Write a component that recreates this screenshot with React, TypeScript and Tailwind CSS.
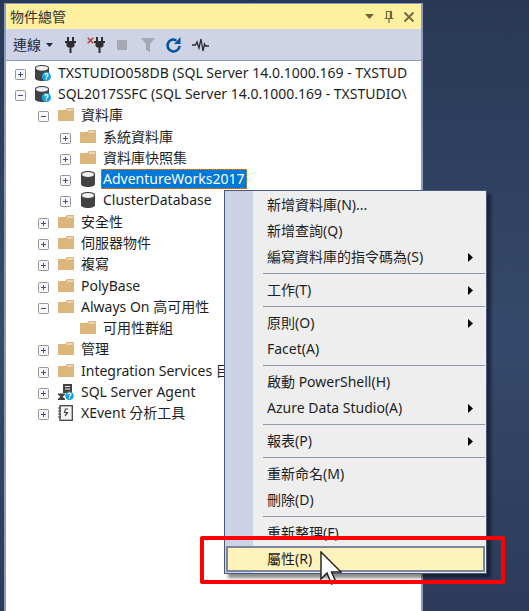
import React from "react";

type IconKind = "server" | "folder" | "db" | "agent" | "xevent";

interface TreeNode {
  label: string;
  icon: IconKind;
  level: 0 | 1 | 2;
  state?: "open" | "closed";
  selected?: boolean;
}

const nodes: TreeNode[] = [
  { label: "TXSTUDIO058DB (SQL Server 14.0.1000.169 - TXSTUD", icon: "server", level: 0, state: "closed" },
  { label: "SQL2017SSFC (SQL Server 14.0.1000.169 - TXSTUDIO\\", icon: "server", level: 0, state: "open" },
  { label: "資料庫", icon: "folder", level: 1, state: "open" },
  { label: "系統資料庫", icon: "folder", level: 2, state: "closed" },
  { label: "資料庫快照集", icon: "folder", level: 2, state: "closed" },
  { label: "AdventureWorks2017", icon: "db", level: 2, state: "closed", selected: true },
  { label: "ClusterDatabase", icon: "db", level: 2, state: "closed" },
  { label: "安全性", icon: "folder", level: 1, state: "closed" },
  { label: "伺服器物件", icon: "folder", level: 1, state: "closed" },
  { label: "複寫", icon: "folder", level: 1, state: "closed" },
  { label: "PolyBase", icon: "folder", level: 1, state: "closed" },
  { label: "Always On 高可用性", icon: "folder", level: 1, state: "open" },
  { label: "可用性群組", icon: "folder", level: 2 },
  { label: "管理", icon: "folder", level: 1, state: "closed" },
  { label: "Integration Services 目錄", icon: "folder", level: 1, state: "closed" },
  { label: "SQL Server Agent", icon: "agent", level: 1, state: "closed" },
  { label: "XEvent 分析工具", icon: "xevent", level: 1, state: "closed" },
];

interface MenuEntry {
  label: string;
  submenu?: boolean;
  active?: boolean;
}

const menuGroups: MenuEntry[][] = [
  [{ label: "新增資料庫(N)..." }, { label: "新增查詢(Q)" }, { label: "編寫資料庫的指令碼為(S)", submenu: true }],
  [{ label: "工作(T)", submenu: true }],
  [{ label: "原則(O)", submenu: true }, { label: "Facet(A)" }],
  [{ label: "啟動 PowerShell(H)" }, { label: "Azure Data Studio(A)", submenu: true }],
  [{ label: "報表(P)", submenu: true }],
  [{ label: "重新命名(M)" }, { label: "刪除(D)" }],
  [{ label: "重新整理(F)" }, { label: "屬性(R)", active: true }],
];

const indent = { 0: "pl-[9px]", 1: "pl-8", 2: "pl-[54px]" };

function NodeIcon({ kind }: { kind: IconKind }) {
  if (kind === "folder") {
    return (
      <svg className="size-4 shrink-0" viewBox="0 0 16 16" aria-hidden="true">
        <path d="M0 3H7L9 1H16V14H0Z" fill="#dcb67a" />
        <path d="M9.3 2.5H15V3.5H8.3Z" fill="#fbf3e2" />
      </svg>
    );
  }
  if (kind === "db") {
    return (
      <svg className="size-4 shrink-0" viewBox="0 0 16 16" aria-hidden="true">
        <path d="M1 3C1 1 4 0 8 0S15 1 15 3V13C15 15 12 16 8 16S1 15 1 13Z" fill="#424242" />
        <ellipse cx="8" cy="3.4" rx="6" ry="2.5" fill="#f0eff1" />
      </svg>
    );
  }
  if (kind === "server") {
    return (
      <svg className="size-4 shrink-0" viewBox="0 0 16 16" aria-hidden="true">
        <path d="M0 3C0 1 3 0 7 0S14 1 14 3V13C14 15 11 16 7 16S0 15 0 13Z" fill="#424242" />
        <ellipse cx="7" cy="3.3" rx="6" ry="2.4" fill="#f0eff1" />
        <circle cx="11.4" cy="11.4" r="4.6" fill="#1ba1e2" />
        <path d="M9.9 10.3C9.9 8.2 13 8.2 13 10.1C13 11.3 11.4 11.2 11.4 12.5M11.4 13.2V14.4" fill="none" stroke="#fff" strokeWidth="1.2" />
      </svg>
    );
  }
  if (kind === "agent") {
    return (
      <svg className="size-4 shrink-0" viewBox="0 0 16 16" aria-hidden="true">
        <path d="M5 0H14V9H5Z" fill="#424242" />
        <path d="M7 2.5H12M7 5H12" stroke="#f0eff1" strokeWidth="1.2" />
        <path d="M0 9.5H7V10.8L4.6 12.8L7 14.8V16H0V14.8L2.4 12.8L0 10.8Z" fill="#424242" />
        <circle cx="11.5" cy="11.7" r="4.3" fill="#1ba1e2" />
        <path d="M10 10.6C10 8.7 13 8.7 13 10.4C13 11.5 11.5 11.4 11.5 12.6M11.5 13.3V14.4" fill="none" stroke="#fff" strokeWidth="1.2" />
      </svg>
    );
  }
  return (
    <svg className="size-4 shrink-0" viewBox="0 0 16 16" aria-hidden="true">
      <rect x="2" y="0.7" width="12.3" height="14.6" fill="#f4f4f4" stroke="#424242" strokeWidth="1.3" />
      <path d="M0 3H3M0 6H3M0 9H3M0 12H3" stroke="#424242" />
      <path d="M10 4H7.5L6.5 7.5H9L7 11L10 7.5" fill="none" stroke="#424242" strokeWidth="1.1" />
    </svg>
  );
}

function Expander({ state, label }: { state?: "open" | "closed"; label: string }) {
  if (!state) return <span className="w-[11px] shrink-0" />;
  return (
    <button type="button" aria-label={label} aria-expanded={state === "open"} className="mt-[3px] size-[11px] shrink-0">
      <svg className="size-[11px]" viewBox="0 0 11 11" aria-hidden="true">
        <rect x="0.5" y="0.5" width="10" height="10" rx="1" fill="#f7f7f7" stroke="#959595" />
        <path d={state === "open" ? "M3 5.5H8" : "M3 5.5H8M5.5 3V8"} stroke="#3f4f90" />
      </svg>
    </button>
  );
}

function ToolButton({ label, children }: { label: string; children: React.ReactNode }) {
  return (
    <button type="button" aria-label={label} className="flex size-[18px] items-center justify-center">
      {children}
    </button>
  );
}

const plugPath = "M2 0H4V4H7V0H9V4H11V6H9.5V9L8 10.5H6.5V16H4.5V10.5H3L1.5 9V6H0V4H2Z";

function Toolbar() {
  return (
    <div className="flex h-8 items-center gap-2 border-b border-[#8e9bbc] bg-[#cfd3e6] pl-[7px] text-[#1b2540]">
      <button type="button" className="flex items-center gap-[5px] text-sm leading-5">
        連線
        <svg className="h-1 w-[7px]" viewBox="0 0 7 4" aria-hidden="true">
          <path d="M0 0H7L3.5 4Z" fill="#1e2b45" />
        </svg>
      </button>
      <ToolButton label="連接物件總管">
        <svg className="h-4 w-[11px]" viewBox="0 0 11 16" aria-hidden="true">
          <path d={plugPath} fill="#2d2d30" />
        </svg>
      </ToolButton>
      <ToolButton label="中斷連接">
        <svg className="h-4 w-[18px] shrink-0" viewBox="0 0 18 16" aria-hidden="true">
          <path transform="translate(7 0)" d={plugPath} fill="#2d2d30" />
          <path d="M0.7 0.7L6.3 6.3M6.3 0.7L0.7 6.3" stroke="#b0402c" strokeWidth="1.5" />
        </svg>
      </ToolButton>
      <ToolButton label="停止">
        <span className="size-[10px] bg-[#a5a8b3]" />
      </ToolButton>
      <ToolButton label="篩選">
        <svg className="size-[14px]" viewBox="0 0 14 14" aria-hidden="true">
          <path d="M0 0H14L9 6V14L5 12V6Z" fill="#a5a8b3" />
        </svg>
      </ToolButton>
      <ToolButton label="重新整理">
        <svg className="size-4" viewBox="0 0 16 16" aria-hidden="true">
          <path d="M13.6 9A6 6 0 1 1 10.5 3.2" fill="none" stroke="#00539c" strokeWidth="2.6" />
          <path d="M8.5 0H15V7H8.5Z" fill="#cfd3e6" />
          <path d="M14.5 0V7H8Z" fill="#00539c" />
          <path d="M8 3H10.5" stroke="#00539c" strokeWidth="2.4" />
        </svg>
      </ToolButton>
      <ToolButton label="活動監視器">
        <svg className="h-[14px] w-[17px]" viewBox="0 0 17 14" aria-hidden="true">
          <path d="M0 7H3.5L5 4L7 10L9 1L11 13L12.5 6L13.5 8H17" fill="none" stroke="#2d2d30" strokeWidth="1.3" />
        </svg>
      </ToolButton>
    </div>
  );
}

function TitleBar() {
  return (
    <header className="flex h-[25px] items-center justify-between bg-[#fff0a0] pr-[6px] pl-1 text-[#333333]">
      <h1 className="text-sm leading-5">物件總管</h1>
      <div className="flex items-center gap-2">
        <button type="button" aria-label="視窗位置" className="flex size-3 items-center justify-center">
          <svg className="h-[5px] w-[9px]" viewBox="0 0 9 5" aria-hidden="true">
            <path d="M0 0H9L4.5 5Z" fill="#75633d" />
          </svg>
        </button>
        <button type="button" aria-label="自動隱藏" className="size-3">
          <svg className="size-3" viewBox="0 0 12 12" aria-hidden="true">
            <path d="M3.5 7.5V0.5H8.5V7.5M1.5 7.5H10.5M6 7.5V12" fill="none" stroke="#75633d" strokeWidth="1.2" />
            <path d="M7.5 0.5V7.5" stroke="#75633d" strokeWidth="1.5" />
          </svg>
        </button>
        <button type="button" aria-label="關閉" className="size-3">
          <svg className="size-3" viewBox="0 0 12 12" aria-hidden="true">
            <path d="M1.5 1.5L10.5 10.5M10.5 1.5L1.5 10.5" stroke="#75633d" strokeWidth="1.8" />
          </svg>
        </button>
      </div>
    </header>
  );
}

function ContextMenu() {
  return (
    <div
      role="menu"
      className="absolute top-[190px] left-[224px] w-[263px] border border-[#4a587c] bg-[#eeeeee] bg-linear-to-r from-[#cdd2e6] from-[28px] to-[#eeeeee] to-[28px] p-px text-[#1e1e1e] shadow-[4px_4px_3px_rgba(0,0,0,0.45)]"
    >
      {menuGroups.map((group, g) => (
        <React.Fragment key={g}>
          {g > 0 && <div role="separator" className="my-[3px] ml-[37px] h-px bg-[#8f99b0]" />}
          {group.map((item) => (
            <button
              key={item.label}
              type="button"
              role="menuitem"
              className={
                item.active
                  ? "flex h-[26px] w-full items-center justify-between border-2 border-[#7d879c] bg-[#fdf3bb] pr-[10px] pl-[39px] text-sm leading-5"
                  : "flex h-[26px] w-full items-center justify-between pr-3 pl-[41px] text-sm leading-5"
              }
            >
              <span>{item.label}</span>
              {item.submenu && (
                <svg className="h-[9px] w-[5px]" viewBox="0 0 5 9" aria-hidden="true">
                  <path d="M0 0L5 4.5L0 9Z" fill="#000" />
                </svg>
              )}
            </button>
          ))}
        </React.Fragment>
      ))}
    </div>
  );
}

export default function App() {
  return (
    <main className="relative flex h-screen overflow-hidden bg-linear-to-b from-[#293955] via-[#35496a] via-55% to-[#2c3b59] pt-[3px] pl-1 font-['Noto_Sans','Noto_Sans_CJK_TC',sans-serif]">
      <section className="flex w-[419px] flex-col border-x-2 border-t border-[#8e9bbc] bg-white">
        <TitleBar />
        <Toolbar />
        <ul role="tree" className="grid h-[363px] auto-rows-fr overflow-hidden pt-px text-[#1e1e1e]">
          {nodes.map((n) => (
            <li key={n.label} role="treeitem" aria-selected={!!n.selected} className={`flex min-w-0 items-center gap-[9px] ${indent[n.level]}`}>
              <Expander state={n.state} label={n.label} />
              <span className="flex min-w-0 flex-1 items-center gap-[5px]">
                <NodeIcon kind={n.icon} />
                <span
                  className={
                    n.selected
                      ? "bg-[#0078d7] px-[2px] text-sm leading-5 whitespace-nowrap text-white outline-1 -outline-offset-1 outline-[#d08a3c] outline-dotted"
                      : "overflow-hidden px-[2px] text-sm leading-5 whitespace-nowrap"
                  }
                >
                  {n.label}
                </span>
              </span>
            </li>
          ))}
        </ul>
      </section>

      <ContextMenu />

      <svg className="absolute top-[551px] left-[320px] h-[35px] w-[22px]" viewBox="0 0 22 35" aria-hidden="true">
        <path d="M1 1V28L7 22L11.5 33L16 31L11.5 21H21Z" fill="#fff" stroke="#1c1c1c" strokeWidth="1.4" />
      </svg>
      <div className="absolute top-[536px] left-[200px] h-12 w-[305px] rounded-xs border-4 border-[#ff0000]" />
    </main>
  );
}
